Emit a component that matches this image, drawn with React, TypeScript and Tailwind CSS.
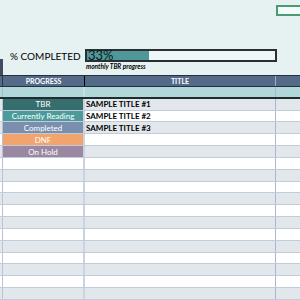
const statuses = [
  { label: 'TBR', bg: 'bg-[#356e6c]' },
  { label: 'Currently Reading', bg: 'bg-[#4b9b9b]' },
  { label: 'Completed', bg: 'bg-[#7a8fae]' },
  { label: 'DNF', bg: 'bg-[#f2a46e]' },
  { label: 'On Hold', bg: 'bg-[#9a87a1]' },
];

const titles = ['SAMPLE TITLE #1', 'SAMPLE TITLE #2', 'SAMPLE TITLE #3'];

const Row = ({ index }: { index: number }) => {
  const shaded = index % 2 === 0;
  const status = statuses[index];
  return (
    <div
      className={`flex h-[12px] border-b border-[#c2cbd9] ${shaded ? 'bg-[#e2e7ec]' : 'bg-white'}`}
    >
      <div className="w-[3px] border-r border-[#b8c4d6]" />
      <div className="w-[82px] border-r-2 border-[#c9d3e2]">
        {status && (
          <div
            className={`h-full flex items-center justify-center text-white text-[8px] leading-none whitespace-nowrap ${status.bg}`}
          >
            {status.label}
          </div>
        )}
      </div>
      <div className="w-[191px] border-r border-[#a9b7cf] flex items-center pl-[1px] text-[8px] font-bold text-black leading-none whitespace-nowrap">
        {titles[index] ?? ''}
      </div>
      <div className="flex-1" />
    </div>
  );
};

export default function App() {
  return (
    <div className="w-[300px] h-[300px] overflow-hidden bg-[#e6f1f1] font-['Lato',sans-serif] flex flex-col">
      <div className="flex justify-end pt-[5px]">
        <div className="w-[24px] h-[11px] border-2 border-r-0 border-[#4a9a73] bg-[#f4f9f9]" />
      </div>
      <div className="flex h-[60px]">
        <div className="w-[3px] flex flex-col justify-end">
          <div className="h-[16px] bg-[#3e4d60]" />
        </div>
        <div className="flex-1 flex flex-col pt-[33px]">
          <div className="flex items-center">
            <div className="w-[82px] pl-[7px] text-[10px] leading-none text-black whitespace-nowrap">
              % COMPLETED
            </div>
            <div className="w-[192px] h-[13px] border-2 border-[#2a2f33] bg-[linear-gradient(to_right,#4f9799_33%,#eef6f6_33%)] flex items-center pl-[1px] text-[13px] leading-none text-[#0c1719]">
              33%
            </div>
          </div>
          <div className="pl-[83px] pt-[2px] text-[6.5px] italic font-bold leading-none text-black whitespace-nowrap">
            monthly TBR progress
          </div>
        </div>
      </div>
      <div className="flex h-[12px] border-y border-[#23303d] bg-[#536a89] text-white text-[7px] font-bold leading-none">
        <div className="w-[3px] border-r border-[#2b3a4c]" />
        <div className="w-[82px] border-r border-black flex items-center justify-center">PROGRESS</div>
        <div className="w-[191px] border-r border-[#a3b0c4] flex items-center justify-center">TITLE</div>
        <div className="flex-1" />
      </div>
      <div className="flex h-[12px] border-b-2 border-[#1f2b2e] bg-[#b1d7d9]">
        <div className="w-[3px] border-r border-[#9cc2c5]" />
        <div className="w-[82px] border-r-2 border-[#c4dfe0]" />
        <div className="w-[191px] border-r border-[#9cc2c5]" />
        <div className="flex-1" />
      </div>
      {Array.from({ length: 17 }).map((_, i) => (
        <Row key={i} index={i} />
      ))}
    </div>
  );
}
